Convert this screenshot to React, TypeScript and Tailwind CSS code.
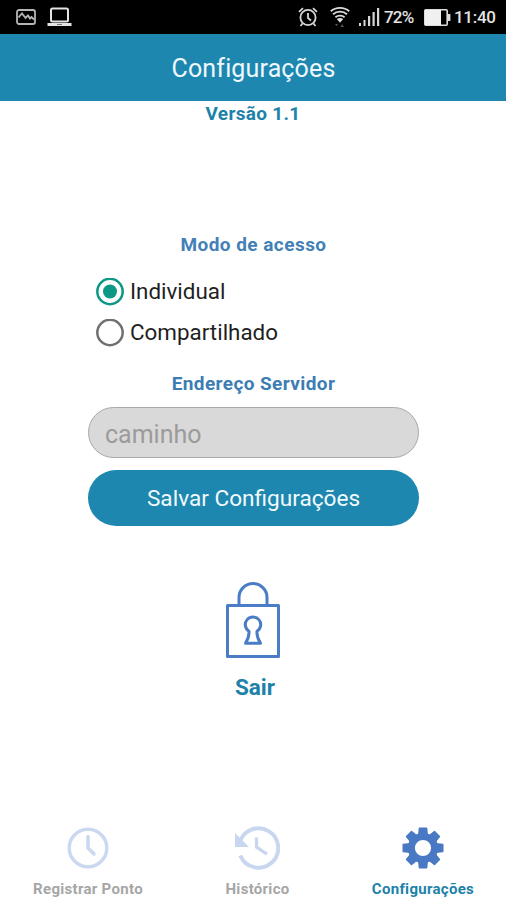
import { useState } from 'react'
import type { ReactNode } from 'react'

type AccessMode = 'individual' | 'shared'
type Tab = 'clock' | 'history' | 'settings'

const MODES: { value: AccessMode; label: string }[] = [
  { value: 'individual', label: 'Individual' },
  { value: 'shared', label: 'Compartilhado' },
]

const TEETH = [0, 45, 90, 135, 180, 225, 270, 315]

function StatusBar() {
  return (
    <div className="flex h-[34px] items-center bg-black pl-4 pr-[11px] text-[17px] text-[#e4e4e4]">
      <svg width="20" height="16" viewBox="0 0 20 16" fill="none" stroke="#b5b5b5" strokeWidth="1.8">
        <rect x="1" y="1" width="18" height="14" rx="2" />
        <path d="M2.5 8.5 6 4.5l3.5 4.5 2.500-2.500L14 9.500l1.500-1.500 2.500 2.500" />
      </svg>
      <svg className="ml-[11px]" width="25" height="20" viewBox="0 0 25 20" fill="none" stroke="#e4e4e4">
        <rect x="4" y="1.5" width="17" height="13" rx="1.5" strokeWidth="2" />
        <path d="M0.5 17.5h24" strokeWidth="3" />
        <path d="M10 17.5h5" stroke="#777" strokeWidth="1" />
      </svg>
      <svg className="ml-auto" width="20" height="20" viewBox="0 0 20 20" fill="none" stroke="#d6d6d6" strokeWidth="1.8">
        <circle cx="10" cy="10.5" r="7.6" />
        <path d="M10 6v5l3 2.5M1 4.8 5 1.2M19 4.8l-4-3.6M4.5 16.5 2.5 19M15.5 16.5l2 2.5" />
      </svg>
      <svg className="ml-3" width="20" height="22" viewBox="0 0 20 22" fill="none" stroke="#dcdcdc" strokeWidth="1.8">
        <path d="M0.8 5.2c5-4.400 13.400-4.400 18.400 0M3 8.2c4-3.400 10-3.400 14 0M5.400 11.200c2.600-2.200 6.600-2.200 9.200 0" />
        <path d="M6.800 13c2-1.400 4.400-1.400 6.400 0L10 16.800z" fill="#dcdcdc" stroke="none" />
        <path d="M5 18h3l-1.500 2.200zM10.500 21l1.700-3 1.800 3z" fill="#555" stroke="none" />
      </svg>
      <svg className="ml-[9px]" width="21" height="18" viewBox="0 0 21 18" fill="#d6d6d6">
        <rect x="0" y="15" width="2" height="3" />
        <rect x="4.5" y="12" width="2" height="6" />
        <rect x="9" y="8" width="2.2" height="10" />
        <rect x="13.5" y="4" width="2.2" height="14" />
        <rect x="18" y="0" width="2.2" height="18" />
      </svg>
      <span className="mt-0.5 ml-[4px] w-[31px] text-[17px] font-medium tracking-[-0.8px] whitespace-nowrap">72%</span>
      <svg className="ml-[9px]" width="27" height="17" viewBox="0 0 27 17">
        <rect x="0.8" y="0.8" width="22.4" height="15.4" rx="1" fill="none" stroke="#dcdcdc" strokeWidth="1.6" />
        <rect x="1" y="1" width="16" height="15" fill="#f0f0f0" />
        <rect x="24" y="5" width="2.4" height="7" fill="#dcdcdc" />
      </svg>
      <span className="mt-0.5 ml-[3px] w-[41px] font-medium tracking-[-0.3px] whitespace-nowrap">11:40</span>
    </div>
  )
}

function Radio({ checked }: { checked: boolean }) {
  return (
    <svg className="shrink-0" width="28" height="28" viewBox="0 0 28 28">
      <circle cx="14" cy="13.5" r="12.7" fill="none" stroke={checked ? '#0b9884' : '#707070'} strokeWidth="2.500" />
      {checked && <circle cx="14" cy="13.5" r="7" fill="#0b9884" />}
    </svg>
  )
}

function LockIcon() {
  return (
    <svg width="56" height="78" viewBox="0 0 56 78" fill="none" stroke="#4b7dc6" strokeWidth="3" strokeLinejoin="round">
      <path d="M14 25V16.500a14 14 0 0 1 28 0V25" />
      <rect x="2.5" y="24.5" width="51" height="51" />
      <path d="M20.500 62.200Q24.500 56 24 50.200a7.700 7.700 0 1 1 8 0q-.5 5.800 3.500 12z" />
    </svg>
  )
}

function ClockIcon() {
  return (
    <svg width="42" height="42" viewBox="0 0 42 42" fill="none" stroke="#ccd8ef" strokeWidth="3.5">
      <circle cx="21" cy="21" r="18.8" />
      <path d="M21 9.500v11.500l6 6" strokeLinecap="round" />
    </svg>
  )
}

function HistoryIcon() {
  return (
    <svg width="46" height="44" viewBox="0 0 46 44" fill="none" stroke="#c8d7ef">
      <path d="M5.450 17A19.700 19.700 0 1 1 6.300 29.500" strokeWidth="4" />
      <path d="M1 7v14H15z" fill="#c8d7ef" stroke="none" />
      <path d="M22.500 11.500v9.700l10.500 7" strokeWidth="3.200" />
    </svg>
  )
}

function GearIcon() {
  return (
    <svg width="42" height="42" viewBox="-21 -21 42 42" fill="#4a79c4" stroke="#4a79c4">
      <circle r="11.600" fill="none" strokeWidth="7" />
      {TEETH.map((angle) => (
        <path
          key={angle}
          d="M-4.200-13-3.500-19.700h7L4.200-13z"
          strokeWidth="1.600"
          strokeLinejoin="round"
          transform={`rotate(${angle})`}
        />
      ))}
    </svg>
  )
}

const TABS: { value: Tab; label: string; icon: ReactNode }[] = [
  { value: 'clock', label: 'Registrar Ponto', icon: <ClockIcon /> },
  { value: 'history', label: 'Histórico', icon: <HistoryIcon /> },
  { value: 'settings', label: 'Configurações', icon: <GearIcon /> },
]

export default function App() {
  const [mode, setMode] = useState<AccessMode>('individual')
  const [server, setServer] = useState('')
  const [tab, setTab] = useState<Tab>('settings')

  return (
    <div className="flex h-[900px] w-[506px] flex-col overflow-hidden bg-white font-['Roboto',sans-serif]">
      <StatusBar />
      <header className="flex h-[67px] items-center justify-center bg-[#1d87b0] pt-0.5 pl-px text-[25px] tracking-[0.15px] text-[#eef8fc]">
        <h1>Configurações</h1>
      </header>

      <main className="flex flex-1 flex-col items-center">
        <p className="mt-[1px] text-[19px] leading-6 font-bold tracking-[0.3px] text-[#1d82a8]">Versão 1.1</p>

        <h2 className="mt-[107px] pl-px text-[19px] leading-6 font-bold tracking-[0.45px] text-[#4380b8]">
          Modo de acesso
        </h2>
        <div className="mt-[21px] flex w-[331px] flex-col gap-[13px] pl-2">
          {MODES.map(({ value, label }) => (
            <button
              key={value}
              type="button"
              onClick={() => setMode(value)}
              className="flex h-7 items-center gap-[6.5px] text-[22.4px] text-[#1f1f1f]"
            >
              <Radio checked={mode === value} />
              <span className="-mt-px">{label}</span>
            </button>
          ))}
        </div>

        <h2 className="mt-[25px] pl-px text-[19px] leading-6 font-bold tracking-[0.4px] text-[#3c7db3]">
          Endereço Servidor
        </h2>
        <input
          type="text"
          value={server}
          onChange={(e) => setServer(e.target.value)}
          placeholder="caminho"
          className="mt-[11px] ml-px h-[51px] w-[331px] rounded-full border border-[#a9a9a9] bg-[#d9d9d9] px-4 pt-1 text-[25px] text-[#1f1f1f] placeholder:text-[#9b9b9b]"
        />
        <button
          type="button"
          className="mt-3 ml-px h-14 w-[331px] rounded-full bg-[#1d87b0] pt-0.5 text-[22.6px] text-[#f1f9fc]"
        >
          Salvar Configurações
        </button>

        <button type="button" className="mt-[55px] flex flex-col items-center text-[#1d82a8]">
          <LockIcon />
          <span className="mt-[14px] pl-1 text-[22.500px] leading-7 font-bold">Sair</span>
        </button>
      </main>

      <nav className="grid h-[82px] grid-cols-[175px_164px_167px]">
        {TABS.map(({ value, label, icon }) => (
          <button
            key={value}
            type="button"
            onClick={() => setTab(value)}
            className={`flex flex-col items-center text-[15px] font-bold tracking-[0.3px] ${
              tab === value ? 'text-[#1d82a8]' : 'text-[#a6a6a6]'
            }`}
          >
            <span className="mt-[7px] flex h-[46px] items-center">{icon}</span>
            <span className="mt-2 pl-px leading-5 whitespace-nowrap">{label}</span>
          </button>
        ))}
      </nav>
    </div>
  )
}
